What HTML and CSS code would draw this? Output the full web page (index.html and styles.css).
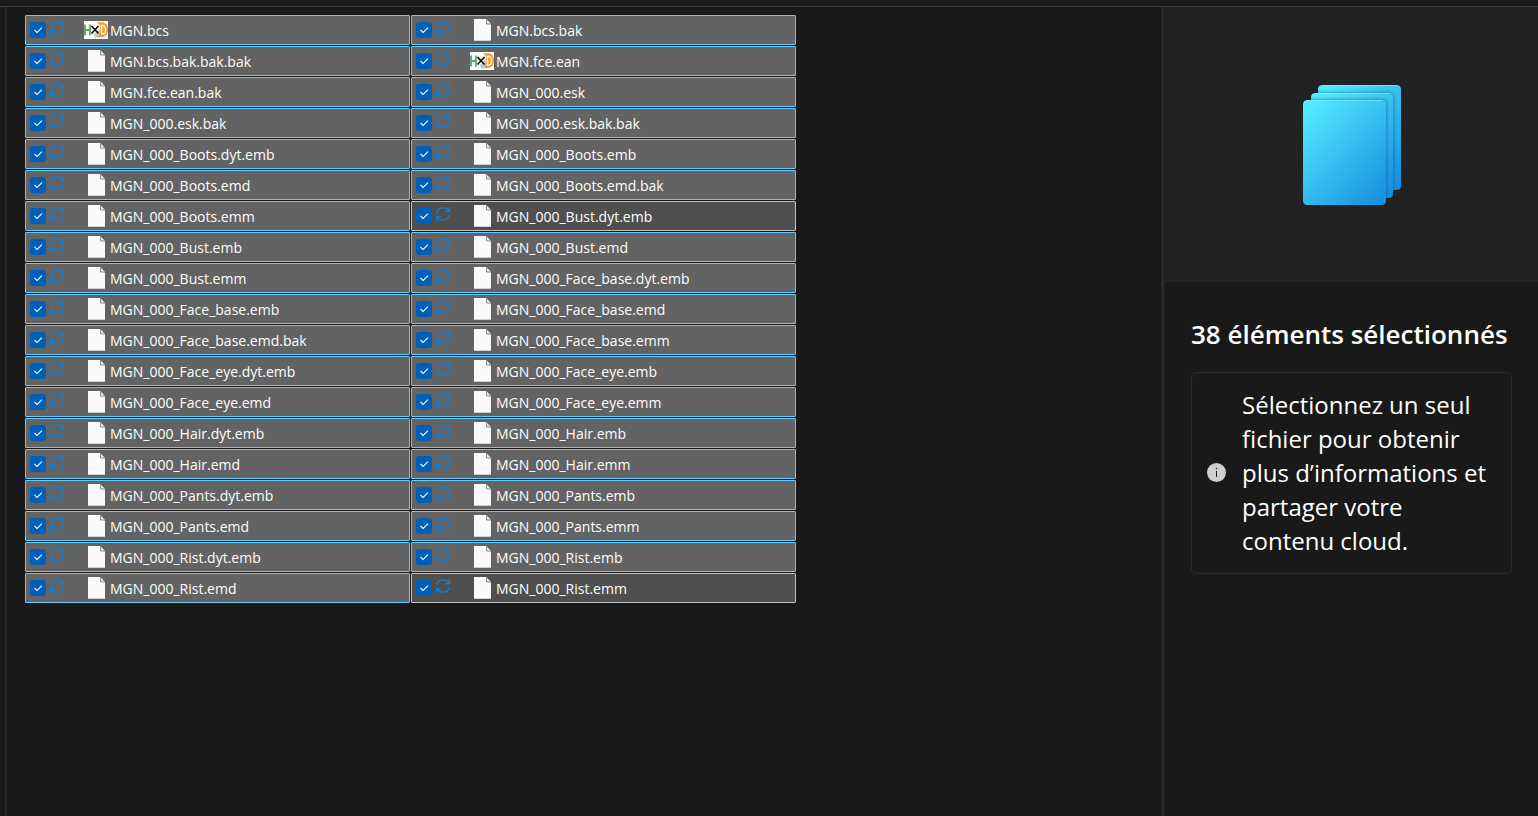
FILE: index.html
```html
<!DOCTYPE html>
<html lang="fr">
<head>
<meta charset="utf-8">
<title>Explorateur de fichiers</title>
<link rel="stylesheet" href="styles.css">
</head>
<body>
<svg class="sprite" aria-hidden="true">
  <defs>
    <linearGradient id="orange" x1="0" y1="0" x2="1" y2="1"><stop offset="0" stop-color="#f6b24e"/><stop offset="1" stop-color="#e58a1c"/></linearGradient>
  </defs>
  <symbol id="sync" viewBox="0 0 14 14">
    <path d="M.6 5.500C1.800 2.300 4.300.9 7 .9S11.800 2.200 13 4.500M13.400.3v4.200H9.200M13.400 8.500C12.200 11.700 9.700 13.100 7 13.100S2.200 11.800 1 9.500M.6 13.700V9.500h4.200" fill="none" stroke="#0a80e0" stroke-width="1.250"/>
  </symbol>
  <symbol id="file" viewBox="0 0 24 24">
    <path d="M4 1h12l5 5.500V23H4z" fill="#fafafa"/>
    <path d="M16.500 1.500v4.500h4.500" fill="#ededed" stroke="#8b8b8b"/>
    <path d="M4 22.500h17" stroke="#d0d0d0"/>
  </symbol>
  <symbol id="hxd" viewBox="0 0 24 18">
    <path d="M0 0h24v18H0z" fill="#fff"/>
    <path d="M10 13l6-6 2 9-7 1z" fill="#c9c9c9"/>
    <path d="M1 3.500v11M6 3.500v11M1 9h5" fill="none" stroke="#58a869" stroke-width="1.800"/>
    <path d="M13 1h5c8 0 8 15 0 15h-4l2-4V5z" fill="url(#orange)"/>
    <path d="M17.500 4.500v8.500h1.200c4 0 4-8.500 0-8.500z" fill="#f5a43c" stroke="#fff3df" stroke-width="1.400"/>
    <path d="M7.500 5l7 7.500M14.500 5l-7 7.500" stroke="#0b0b0b" stroke-width="1.700"/>
  </symbol>
</svg>
<div class="window">
  <main class="files">
    <ul class="grid">
      <li><label class="item"><input type="checkbox" checked><svg class="sync"><use href="#sync"/></svg><svg class="icon hxd"><use href="#hxd"/></svg><span>MGN.bcs</span></label></li>
      <li><label class="item"><input type="checkbox" checked><svg class="sync"><use href="#sync"/></svg><svg class="icon"><use href="#file"/></svg><span>MGN.bcs.bak</span></label></li>
      <li><label class="item"><input type="checkbox" checked><svg class="sync"><use href="#sync"/></svg><svg class="icon"><use href="#file"/></svg><span>MGN.bcs.bak.bak.bak</span></label></li>
      <li><label class="item"><input type="checkbox" checked><svg class="sync"><use href="#sync"/></svg><svg class="icon hxd"><use href="#hxd"/></svg><span>MGN.fce.ean</span></label></li>
      <li><label class="item"><input type="checkbox" checked><svg class="sync"><use href="#sync"/></svg><svg class="icon"><use href="#file"/></svg><span>MGN.fce.ean.bak</span></label></li>
      <li><label class="item"><input type="checkbox" checked><svg class="sync"><use href="#sync"/></svg><svg class="icon"><use href="#file"/></svg><span>MGN_000.esk</span></label></li>
      <li><label class="item"><input type="checkbox" checked><svg class="sync"><use href="#sync"/></svg><svg class="icon"><use href="#file"/></svg><span>MGN_000.esk.bak</span></label></li>
      <li><label class="item"><input type="checkbox" checked><svg class="sync"><use href="#sync"/></svg><svg class="icon"><use href="#file"/></svg><span>MGN_000.esk.bak.bak</span></label></li>
      <li><label class="item"><input type="checkbox" checked><svg class="sync"><use href="#sync"/></svg><svg class="icon"><use href="#file"/></svg><span>MGN_000_Boots.dyt.emb</span></label></li>
      <li><label class="item"><input type="checkbox" checked><svg class="sync"><use href="#sync"/></svg><svg class="icon"><use href="#file"/></svg><span>MGN_000_Boots.emb</span></label></li>
      <li><label class="item"><input type="checkbox" checked><svg class="sync"><use href="#sync"/></svg><svg class="icon"><use href="#file"/></svg><span>MGN_000_Boots.emd</span></label></li>
      <li><label class="item"><input type="checkbox" checked><svg class="sync"><use href="#sync"/></svg><svg class="icon"><use href="#file"/></svg><span>MGN_000_Boots.emd.bak</span></label></li>
      <li><label class="item"><input type="checkbox" checked><svg class="sync"><use href="#sync"/></svg><svg class="icon"><use href="#file"/></svg><span>MGN_000_Boots.emm</span></label></li>
      <li><label class="item muted"><input type="checkbox" checked><svg class="sync"><use href="#sync"/></svg><svg class="icon"><use href="#file"/></svg><span>MGN_000_Bust.dyt.emb</span></label></li>
      <li><label class="item"><input type="checkbox" checked><svg class="sync"><use href="#sync"/></svg><svg class="icon"><use href="#file"/></svg><span>MGN_000_Bust.emb</span></label></li>
      <li><label class="item"><input type="checkbox" checked><svg class="sync"><use href="#sync"/></svg><svg class="icon"><use href="#file"/></svg><span>MGN_000_Bust.emd</span></label></li>
      <li><label class="item"><input type="checkbox" checked><svg class="sync"><use href="#sync"/></svg><svg class="icon"><use href="#file"/></svg><span>MGN_000_Bust.emm</span></label></li>
      <li><label class="item"><input type="checkbox" checked><svg class="sync"><use href="#sync"/></svg><svg class="icon"><use href="#file"/></svg><span>MGN_000_Face_base.dyt.emb</span></label></li>
      <li><label class="item"><input type="checkbox" checked><svg class="sync"><use href="#sync"/></svg><svg class="icon"><use href="#file"/></svg><span>MGN_000_Face_base.emb</span></label></li>
      <li><label class="item"><input type="checkbox" checked><svg class="sync"><use href="#sync"/></svg><svg class="icon"><use href="#file"/></svg><span>MGN_000_Face_base.emd</span></label></li>
      <li><label class="item"><input type="checkbox" checked><svg class="sync"><use href="#sync"/></svg><svg class="icon"><use href="#file"/></svg><span>MGN_000_Face_base.emd.bak</span></label></li>
      <li><label class="item"><input type="checkbox" checked><svg class="sync"><use href="#sync"/></svg><svg class="icon"><use href="#file"/></svg><span>MGN_000_Face_base.emm</span></label></li>
      <li><label class="item"><input type="checkbox" checked><svg class="sync"><use href="#sync"/></svg><svg class="icon"><use href="#file"/></svg><span>MGN_000_Face_eye.dyt.emb</span></label></li>
      <li><label class="item"><input type="checkbox" checked><svg class="sync"><use href="#sync"/></svg><svg class="icon"><use href="#file"/></svg><span>MGN_000_Face_eye.emb</span></label></li>
      <li><label class="item"><input type="checkbox" checked><svg class="sync"><use href="#sync"/></svg><svg class="icon"><use href="#file"/></svg><span>MGN_000_Face_eye.emd</span></label></li>
      <li><label class="item"><input type="checkbox" checked><svg class="sync"><use href="#sync"/></svg><svg class="icon"><use href="#file"/></svg><span>MGN_000_Face_eye.emm</span></label></li>
      <li><label class="item"><input type="checkbox" checked><svg class="sync"><use href="#sync"/></svg><svg class="icon"><use href="#file"/></svg><span>MGN_000_Hair.dyt.emb</span></label></li>
      <li><label class="item"><input type="checkbox" checked><svg class="sync"><use href="#sync"/></svg><svg class="icon"><use href="#file"/></svg><span>MGN_000_Hair.emb</span></label></li>
      <li><label class="item"><input type="checkbox" checked><svg class="sync"><use href="#sync"/></svg><svg class="icon"><use href="#file"/></svg><span>MGN_000_Hair.emd</span></label></li>
      <li><label class="item"><input type="checkbox" checked><svg class="sync"><use href="#sync"/></svg><svg class="icon"><use href="#file"/></svg><span>MGN_000_Hair.emm</span></label></li>
      <li><label class="item"><input type="checkbox" checked><svg class="sync"><use href="#sync"/></svg><svg class="icon"><use href="#file"/></svg><span>MGN_000_Pants.dyt.emb</span></label></li>
      <li><label class="item"><input type="checkbox" checked><svg class="sync"><use href="#sync"/></svg><svg class="icon"><use href="#file"/></svg><span>MGN_000_Pants.emb</span></label></li>
      <li><label class="item"><input type="checkbox" checked><svg class="sync"><use href="#sync"/></svg><svg class="icon"><use href="#file"/></svg><span>MGN_000_Pants.emd</span></label></li>
      <li><label class="item"><input type="checkbox" checked><svg class="sync"><use href="#sync"/></svg><svg class="icon"><use href="#file"/></svg><span>MGN_000_Pants.emm</span></label></li>
      <li><label class="item"><input type="checkbox" checked><svg class="sync"><use href="#sync"/></svg><svg class="icon"><use href="#file"/></svg><span>MGN_000_Rist.dyt.emb</span></label></li>
      <li><label class="item"><input type="checkbox" checked><svg class="sync"><use href="#sync"/></svg><svg class="icon"><use href="#file"/></svg><span>MGN_000_Rist.emb</span></label></li>
      <li><label class="item"><input type="checkbox" checked><svg class="sync"><use href="#sync"/></svg><svg class="icon"><use href="#file"/></svg><span>MGN_000_Rist.emd</span></label></li>
      <li><label class="item muted"><input type="checkbox" checked><svg class="sync"><use href="#sync"/></svg><svg class="icon"><use href="#file"/></svg><span>MGN_000_Rist.emm</span></label></li>
    </ul>
  </main>
  <aside class="details">
    <div class="preview">
      <svg class="stack" viewBox="0 0 98 120" aria-hidden="true">
        <defs>
          <linearGradient id="sheet" x1="0.1" y1="0.05" x2="0.9" y2="1"><stop offset="0" stop-color="#53e9ff"/><stop offset="1" stop-color="#1890df"/></linearGradient>
          <filter id="shade" x="-10%" y="-10%" width="125%" height="120%"><feDropShadow dx="0" dy="0" stdDeviation="2" flood-color="#064a78" flood-opacity=".7"/></filter>
          <clipPath id="back"><path d="M19 0h75a4 4 0 0 1 4 4v97a4 4 0 0 1-4 4h-4v4a4 4 0 0 1-4 4h-3v3a4 4 0 0 1-4 4H4a4 4 0 0 1-4-4V19a4 4 0 0 1 4-4h4v-3a4 4 0 0 1 4-4h3V4a4 4 0 0 1 4-4z"/></clipPath>
        </defs>
        <g clip-path="url(#back)" fill="url(#sheet)">
          <rect x="15" width="83" height="105" rx="4"/>
          <rect x="8" y="8" width="82" height="105" rx="4" filter="url(#shade)"/>
          <rect y="15" width="83" height="105" rx="4" filter="url(#shade)"/>
          <path d="M19 .5h75M12 8.500h74M4 15.500h75" stroke="#8df1ff" stroke-opacity=".6"/>
        </g>
      </svg>
    </div>
    <div class="summary">
      <h1>38 éléments sélectionnés</h1>
      <div class="notice">
        <svg class="info" viewBox="0 0 20 20" aria-hidden="true"><circle cx="9.500" cy="9.500" r="9.500" fill="#cfcfcf"/><path d="M9.500 8v6" stroke="#1a1a1a" stroke-width="1"/><circle cx="9.500" cy="5.500" r=".8" fill="#1a1a1a"/></svg>
        <p>Sélectionnez un seul fichier pour obtenir plus d’informations et partager votre contenu cloud.</p>
      </div>
    </div>
  </aside>
</div>
</body>
</html>
```
FILE: styles.css
```css
* { box-sizing: border-box; }

body {
  margin: 0;
  background: #191919;
  color: #fff;
  font-family: "Segoe UI", "Open Sans", "Noto Sans", sans-serif;
}

.sprite { position: absolute; width: 0; height: 0; }

.window {
  display: flex;
  min-height: 100vh;
  padding-top: 6px;
}

.files {
  flex: 1;
  padding: 8px 20px;
  border-top: 1px solid #3a3a3a;
  background: linear-gradient(90deg, #191919 3px, #111 3px 4px, #222 4px 7px, #191919 7px);
}

.grid {
  display: grid;
  grid-template-columns: repeat(2, 385px);
  gap: 1px;
  margin: 0;
  padding: 0 5px;
  list-style: none;
}

.item {
  display: flex;
  align-items: center;
  height: 30px;
  padding-left: 4px;
  border: 1px solid #60cdff;
  border-radius: 1px;
  background: #636363;
  font-size: 14px;
  line-height: 20px;
  white-space: nowrap;
}

.item span { padding-top: 2px; }

.muted { border-color: #c4c4c4; background: #4f4f4f; }

.item input {
  appearance: none;
  flex: none;
  width: 16px;
  height: 16px;
  margin: 0 4px 0 0;
  border-radius: 3px;
  background: #005fb8;
}

.item input:checked::before {
  content: "";
  display: block;
  width: 16px;
  height: 16px;
  background: #fff;
  clip-path: polygon(25% 52%, 30% 47%, 44% 61%, 72% 33%, 77% 38%, 44% 71%);
}

.sync {
  flex: none;
  width: 14px;
  height: 14px;
  margin: 0 20px 4px 0;
}

.icon {
  flex: none;
  width: 24px;
  height: 24px;
  margin-right: 2px;
}

.hxd { height: 18px; }

.details {
  width: 377px;
  padding-left: 4px;
  border-top: 1px solid #3a3a3a;
  background: linear-gradient(90deg, #1f1f1f 1px, #303030 1px 2px, #222 2px 4px, #191919 4px);
}

.preview {
  display: flex;
  align-items: center;
  justify-content: center;
  height: 275px;
  background: #222;
}

.stack { width: 98px; height: 120px; }

.summary { padding: 34px 26px; }

h1 {
  margin: 0 0 20px;
  font-size: 26px;
  font-weight: 600;
  line-height: 36px;
  white-space: nowrap;
}

.notice {
  display: flex;
  align-items: center;
  padding: 15px;
  border: 1px solid #2a2a2a;
  border-radius: 5px;
}

.info {
  flex: none;
  width: 20px;
  height: 20px;
  margin-right: 15px;
}

p {
  margin: 0;
  font-size: 24px;
  line-height: 34px;
}
```
